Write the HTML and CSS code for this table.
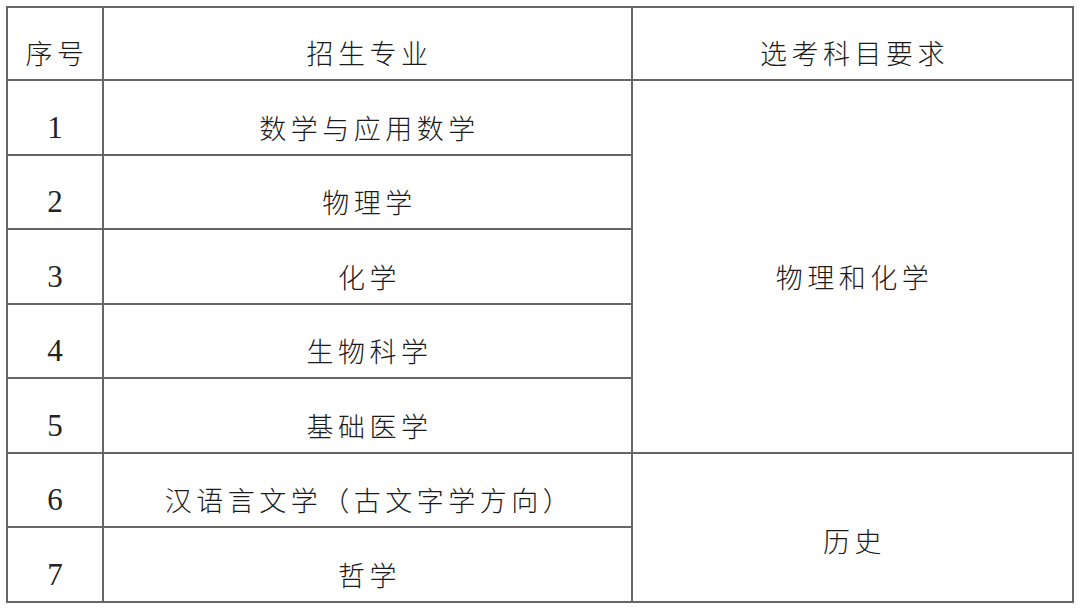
FILE: index.html
```html
<!DOCTYPE html>
<html lang="zh-CN">
<head>
<meta charset="utf-8">
<title>招生专业选考科目要求</title>
<link rel="stylesheet" href="styles.css">
</head>
<body>
<table class="grid">
  <colgroup>
    <col class="c-no">
    <col class="c-major">
    <col class="c-req">
  </colgroup>
  <thead>
    <tr class="head">
      <th>序号</th>
      <th>招生专业</th>
      <th>选考科目要求</th>
    </tr>
  </thead>
  <tbody>
    <tr><td class="num">1</td><td>数学与应用数学</td><td rowspan="5">物理和化学</td></tr>
    <tr><td class="num">2</td><td>物理学</td></tr>
    <tr><td class="num">3</td><td>化学</td></tr>
    <tr><td class="num">4</td><td>生物科学</td></tr>
    <tr><td class="num">5</td><td>基础医学</td></tr>
    <tr><td class="num">6</td><td>汉语言文学（古文字学方向）</td><td rowspan="2" class="tall">历史</td></tr>
    <tr><td class="num">7</td><td>哲学</td></tr>
  </tbody>
</table>
</body>
</html>
```
FILE: styles.css
```css
html, body {
  margin: 0;
  padding: 0;
  background: #ffffff;
}

.grid {
  margin: 6px 0 0 6px;
  width: 1066px;
  border-collapse: collapse;
  table-layout: fixed;
  font-family: "Noto Sans CJK SC", "Noto Sans", sans-serif;
  font-weight: 300;
  font-size: 27px;
  color: #1a1a1a;
}

.c-no { width: 96px; }
.c-major { width: 529px; }
.c-req { width: 441px; }

.grid th,
.grid td {
  border: 2px solid #666666;
  text-align: center;
  vertical-align: middle;
  padding: 20px 0 0 4px;
  height: 52.5px;
  letter-spacing: 4.5px;
  font-weight: 300;
  line-height: 1;
  white-space: nowrap;
}

.grid th {
  height: 53px;
  padding-top: 18px;
}

.grid td.num {
  font-family: "Liberation Serif", "Times New Roman", serif;
  font-size: 31px;
  letter-spacing: 0;
  padding-left: 0;
  color: #222222;
}

.grid td.tall {
  padding-top: 26px;
}
```
